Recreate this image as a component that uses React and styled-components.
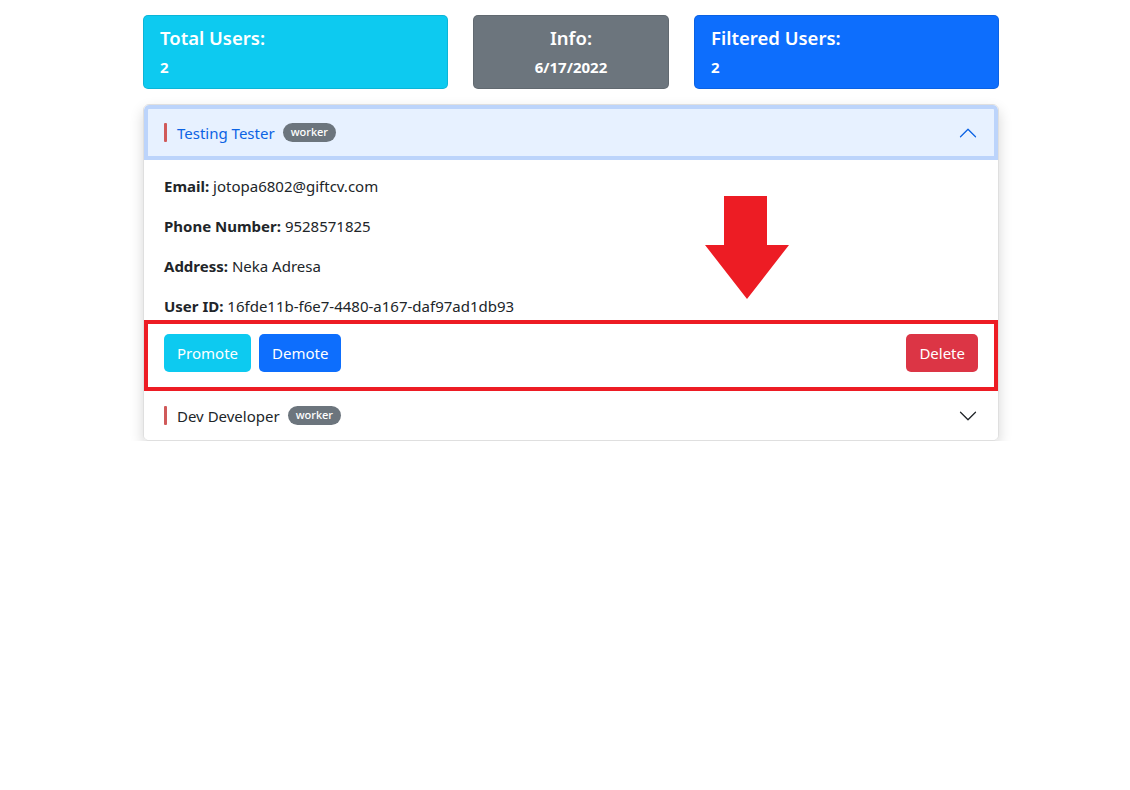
import React from 'react'
import styled, { createGlobalStyle } from "styled-components"

const GlobalStyle = createGlobalStyle`
    body {
        margin: 0;
        background: #fff;
        font-family: "Noto Sans", "Open Sans", sans-serif;
        color: #212529;
    }
`

const Wrapper = styled.div`
    width: 856px;
    margin-left: 143px;
    padding-top: 15px;
`
const StatsRow = styled.div`
    display: flex;
    gap: 25px;
    margin-bottom: 15px;
`
const StatCard = styled.div`
    flex: ${p => p.$narrow ? "0 0 196px" : "1"};
    height: 74px;
    box-sizing: border-box;
    background-color: ${p => p.$color};
    border: 1px solid rgba(0,0,0,.1);
    border-radius: 5px;
    color: white;
    padding: 9px 16px 0;
    text-align: ${p => p.$center ? "center" : "left"};
`
const StatTitle = styled.div`
    font-size: 18.5px;
    font-weight: 600;
    line-height: 26px;
`
const StatValue = styled.div`
    font-size: 15px;
    font-weight: 700;
    margin-top: 6px;
`

const AccordionWrap = styled.div`
    position: relative;
`
const Accordion = styled.div`
    border: 1px solid rgba(0,0,0,.125);
    border-radius: 6px;
    box-shadow: 0 6px 14px rgba(0,0,0,.16);
    overflow: hidden;
`
const Header = styled.div`
    display: flex;
    align-items: center;
    height: ${p => p.$open ? "55px" : "49px"};
    padding: 0 20px;
    background-color: ${p => p.$open ? "#e7f1ff" : "#fff"};
    color: ${p => p.$open ? "#0c63e4" : "#212529"};
    box-shadow: ${p => p.$open ? "inset 0 0 0 4px #bcd4fb" : "none"};
    border-radius: ${p => p.$open ? "5px 5px 0 0" : "0"};
    font-size: 15px;
`
const Marker = styled.span`
    width: 3px;
    height: 19px;
    background-color: #d05a5a;
    border-radius: 1px;
    margin-right: 10px;
`
const Badge = styled.span`
    background-color: #6c757d;
    color: white;
    font-size: 11px;
    font-weight: 500;
    border-radius: 10px;
    padding: 1px 8px 3px;
    margin-left: 8px;
`
const Chevron = styled.svg`
    margin-left: auto;
    width: 20px;
    height: 20px;
    transform: ${p => p.$open ? "rotate(-180deg)" : "none"};
`
const Body = styled.div`
    padding: 14px 0 0;
`
const Line = styled.p`
    margin: 0 20px 16px;
    line-height: 24px;
    font-size: 15px;
    &:last-child { margin-bottom: 2px; }
`
const Actions = styled.div`
    display: flex;
    gap: 8px;
    border: 4px solid #ed1c24;
    padding: 10px 16px 15px;
`
const Button = styled.button`
    height: 38px;
    padding: 0 13px;
    border: 0;
    border-radius: 5px;
    background-color: ${p => p.$color};
    color: white;
    font-family: inherit;
    font-size: 15px;
    cursor: pointer;
    &:last-child { margin-left: auto; }
`
const Arrow = styled.svg`
    position: absolute;
    left: 562px;
    top: 92px;
`

const ChevronIcon = ({ open }) => (
  <Chevron $open={open} viewBox="0 0 16 16" fill={open ? "#0c63e4" : "#212529"}>
    <path fillRule="evenodd" d="M1.646 4.646a.5.5 0 0 1 .708 0L8 10.293l5.646-5.647a.5.5 0 0 1 .708.708l-6 6a.5.5 0 0 1-.708 0l-6-6a.5.5 0 0 1 0-.708z" />
  </Chevron>
)

const App = () => {
  return (
    <Wrapper>
        <GlobalStyle />
        <StatsRow>
            <StatCard $color="#0dcaf0">
                <StatTitle>Total Users:</StatTitle>
                <StatValue>2</StatValue>
            </StatCard>
            <StatCard $color="#6c757d" $narrow $center>
                <StatTitle>Info:</StatTitle>
                <StatValue>6/17/2022</StatValue>
            </StatCard>
            <StatCard $color="#0d6efd">
                <StatTitle>Filtered Users:</StatTitle>
                <StatValue>2</StatValue>
            </StatCard>
        </StatsRow>
        <AccordionWrap>
            <Accordion>
                <Header $open>
                    <Marker />
                    Testing Tester
                    <Badge>worker</Badge>
                    <ChevronIcon open />
                </Header>
                <Body>
                    <Line><b>Email:</b> jotopa6802@giftcv.com</Line>
                    <Line><b>Phone Number:</b> 9528571825</Line>
                    <Line><b>Address:</b> Neka Adresa</Line>
                    <Line><b>User ID:</b> 16fde11b-f6e7-4480-a167-daf97ad1db93</Line>
                </Body>
                <Actions>
                    <Button $color="#0dcaf0">Promote</Button>
                    <Button $color="#0d6efd">Demote</Button>
                    <Button $color="#dc3545">Delete</Button>
                </Actions>
                <Header>
                    <Marker />
                    Dev Developer
                    <Badge>worker</Badge>
                    <ChevronIcon />
                </Header>
            </Accordion>
            <Arrow width="84" height="104" viewBox="0 0 84 104">
                <polygon points="19,0 62,0 62,49 84,49 42,103 0,49 19,49" fill="#ed1c24" />
            </Arrow>
        </AccordionWrap>
    </Wrapper>
  )
}

export default App
